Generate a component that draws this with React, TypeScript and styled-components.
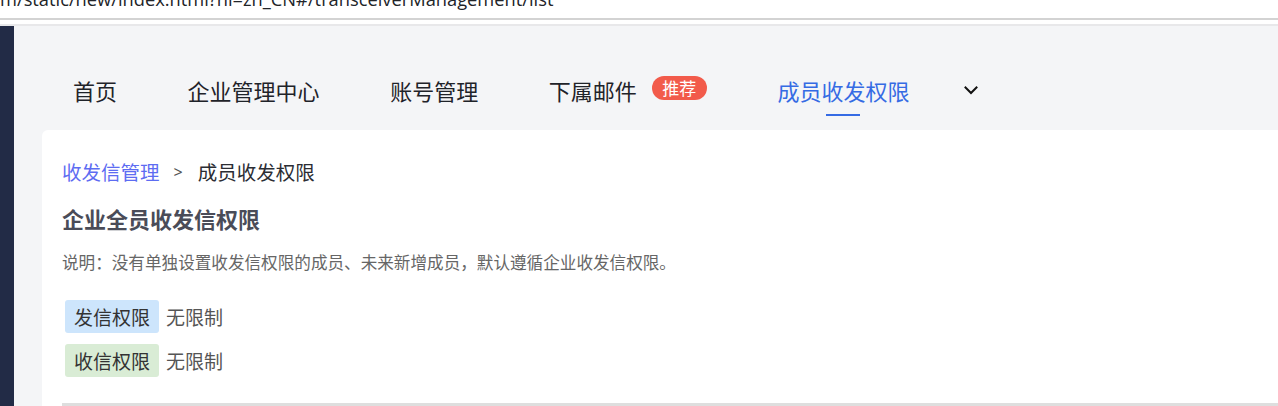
import React from "react"
import styled, { createGlobalStyle } from "styled-components"

const GlobalStyle = createGlobalStyle`
  html, body {
    margin: 0;
    padding: 0;
    background: #ffffff;
    overflow: hidden;
  }
  body {
    font-family: "Noto Sans", "Noto Sans CJK SC", sans-serif;
  }
`

const Page = styled.div`
  height: 406px;
  display: flex;
  flex-direction: column;
`

const AddressBar = styled.div`
  height: 18px;
  background: #ffffff;
  border-bottom: 2px solid #d3d3d3;
  overflow: hidden;
`

const UrlText = styled.div`
  margin-top: -9px;
  font-family: "Open Sans", "Noto Sans", sans-serif;
  font-size: 18.3px;
  line-height: 16px;
  color: #222428;
  white-space: nowrap;
`

const ToolbarShadow = styled.div`
  height: 4px;
  background: #ffffff;
  border-bottom: 2px solid #e8e8ea;
`

const Main = styled.div`
  flex: 1;
  display: flex;
  min-height: 0;
`

const Sidebar = styled.aside`
  width: 14px;
  flex-shrink: 0;
  background: #222b46;
`

const Content = styled.main`
  flex: 1;
  display: flex;
  flex-direction: column;
  background: #f4f5f7;
  padding-left: 28px;
  min-width: 0;
`

const Nav = styled.nav`
  height: 104px;
  box-sizing: border-box;
  padding: 24px 0 0 31px;
  display: flex;
  align-items: center;
  font-family: "Noto Sans CJK SC", sans-serif;
`

const Tab = styled.div<{ active?: boolean }>`
  position: relative;
  display: flex;
  align-items: center;
  font-size: 22px;
  line-height: 30px;
  color: ${(p) => (p.active ? "#356be4" : "#1f2329")};
  white-space: nowrap;
  cursor: pointer;

  & + & {
    margin-left: 70.6px;
  }

  &::after {
    content: "";
    display: ${(p) => (p.active ? "block" : "none")};
    position: absolute;
    left: 50%;
    top: 39px;
    width: 34px;
    height: 2px;
    margin-left: -17px;
    background: #356be4;
  }
`

const Badge = styled.span`
  margin-left: 15px;
  margin-bottom: 4px;
  height: 24px;
  padding: 0 10.5px;
  border-radius: 12px;
  background: #f25b4b;
  color: #ffffff;
  font-size: 17px;
  line-height: 24px;
`

const MoreToggle = styled.button`
  margin-left: 54px;
  padding: 0;
  border: 0;
  background: none;
  display: flex;
  align-items: center;
  color: #111111;
  cursor: pointer;
`

const Card = styled.section`
  flex: 1;
  background: #ffffff;
  border-radius: 6px 0 0 0;
  padding: 28px 0 0 20px;
  font-family: "Noto Sans CJK SC", sans-serif;
`

const Breadcrumb = styled.div`
  display: flex;
  align-items: center;
  font-size: 19.5px;
  line-height: 28px;
  color: #2b2d33;
`

const CrumbLink = styled.a`
  color: #5d6cf2;
  text-decoration: none;
  cursor: pointer;
`

const CrumbSep = styled.span`
  margin: 0 15px 0 14px;
  font-family: "Noto Sans", sans-serif;
  font-size: 16px;
  color: #555555;
`

const Title = styled.h2`
  margin: 17px 0 0;
  font-size: 22px;
  line-height: 30px;
  font-weight: 700;
  color: #4a4c58;
`

const Note = styled.p`
  margin: 17px 0 0;
  font-size: 16.6px;
  line-height: 24px;
  color: #666666;
`

const PermList = styled.div`
  margin-top: 26px;
  padding-left: 3px;
  display: flex;
  flex-direction: column;
  gap: 11px;
`

const PermRow = styled.div`
  display: flex;
  align-items: center;
`

const PermTag = styled.span<{ tone: "blue" | "green" }>`
  height: 33px;
  padding: 0 9px;
  border-radius: 3px;
  background: ${(p) => (p.tone === "blue" ? "#cde5fc" : "#d9ecd5")};
  color: #333333;
  font-size: 19px;
  line-height: 33px;
`

const PermValue = styled.span`
  margin-left: 7px;
  font-size: 19px;
  color: #555555;
`

const Divider = styled.div`
  margin-top: 26px;
  height: 3px;
  background: #dedede;
`

const ChevronDown = () => (
  <svg width="16" height="16" viewBox="0 0 16 16" fill="none">
    <path d="M2.5 5.5 L8 11 L13.5 5.5" stroke="currentColor" strokeWidth="2" strokeLinecap="square" />
  </svg>
)

const tabs = [
  { label: "首页" },
  { label: "企业管理中心" },
  { label: "账号管理" },
  { label: "下属邮件", badge: "推荐" },
  { label: "成员收发权限", active: true },
]

const perms: { label: string; value: string; tone: "blue" | "green" }[] = [
  { label: "发信权限", value: "无限制", tone: "blue" },
  { label: "收信权限", value: "无限制", tone: "green" },
]

const App: React.FC = () => {
  return (
    <Page>
      <GlobalStyle />
      <AddressBar>
        <UrlText>m/static/new/index.html?hl=zh_CN#/transceiverManagement/list</UrlText>
      </AddressBar>
      <ToolbarShadow />
      <Main>
        <Sidebar />
        <Content>
          <Nav>
            {tabs.map((t) => (
              <Tab key={t.label} active={t.active}>
                {t.label}
                {t.badge && <Badge>{t.badge}</Badge>}
              </Tab>
            ))}
            <MoreToggle>
              <ChevronDown />
            </MoreToggle>
          </Nav>
          <Card>
            <Breadcrumb>
              <CrumbLink>收发信管理</CrumbLink>
              <CrumbSep>&gt;</CrumbSep>
              <span>成员收发权限</span>
            </Breadcrumb>
            <Title>企业全员收发信权限</Title>
            <Note>说明：没有单独设置收发信权限的成员、未来新增成员，默认遵循企业收发信权限。</Note>
            <PermList>
              {perms.map((p) => (
                <PermRow key={p.label}>
                  <PermTag tone={p.tone}>{p.label}</PermTag>
                  <PermValue>{p.value}</PermValue>
                </PermRow>
              ))}
            </PermList>
            <Divider />
          </Card>
        </Content>
      </Main>
    </Page>
  )
}

export default App
